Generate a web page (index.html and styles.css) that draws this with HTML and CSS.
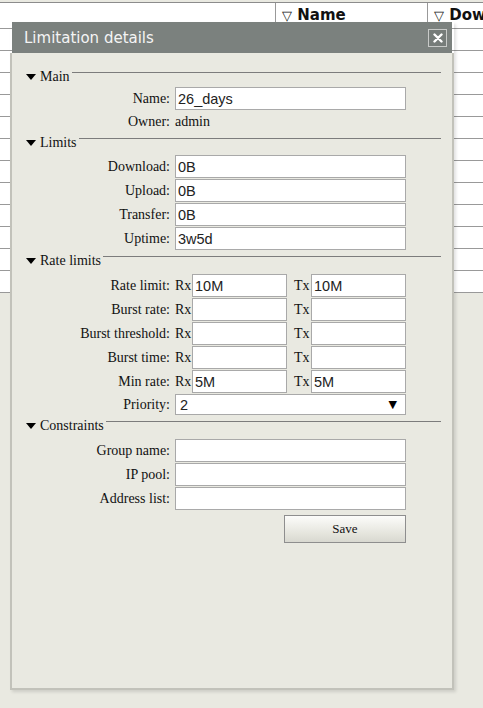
FILE: index.html
```html
<!DOCTYPE html>
<html lang="en">
<head>
    <meta charset="UTF-8">
    <meta name="viewport" content="width=device-width, initial-scale=1.0">
    <title>Limitations</title>
    <link rel="stylesheet" href="styles.css">
</head>
<body>
    <!-- list of limitations behind the dialog -->
    <div class="table">
        <div class="thead">
            <div class="th th-blank"></div>
            <div class="th th-name"><span class="sort">▽</span> Name</div>
            <div class="th th-down"><span class="sort">▽</span> Dow</div>
        </div>
        <div class="tr"></div>
        <div class="tr"></div>
        <div class="tr"></div>
        <div class="tr"></div>
        <div class="tr"></div>
        <div class="tr"></div>
        <div class="tr"></div>
        <div class="tr"></div>
        <div class="tr"></div>
        <div class="tr"></div>
        <div class="tr"></div>
        <div class="tr"></div>
    </div>

    <div class="dialog">
        <div class="dialog-title">
            <span>Limitation details</span>
            <button class="close" title="Close">
                <svg width="10" height="10" viewBox="0 0 10 10">
                    <path d="M1.5 1.5 L8.5 8.5 M8.5 1.5 L1.5 8.5" stroke="#fff" stroke-width="2.4" stroke-linecap="round"/>
                </svg>
            </button>
        </div>

        <div class="dialog-body">
            <div class="section-head head-main"><span class="arrow"></span>Main</div>
            <div class="row">
                <label>Name:</label>
                <input type="text" value="26_days">
            </div>
            <div class="row row-text">
                <label>Owner:</label>
                <span>admin</span>
            </div>

            <div class="section-head head-limits"><span class="arrow"></span>Limits</div>
            <div class="row">
                <label>Download:</label>
                <input type="text" value="0B">
            </div>
            <div class="row">
                <label>Upload:</label>
                <input type="text" value="0B">
            </div>
            <div class="row">
                <label>Transfer:</label>
                <input type="text" value="0B">
            </div>
            <div class="row">
                <label>Uptime:</label>
                <input type="text" value="3w5d">
            </div>

            <div class="section-head head-rates"><span class="arrow"></span>Rate limits</div>
            <div class="row">
                <label>Rate limit:</label>
                <div class="pair">
                    <span class="dir">Rx</span><input type="text" value="10M">
                    <span class="dir tx">Tx</span><input type="text" value="10M">
                </div>
            </div>
            <div class="row">
                <label>Burst rate:</label>
                <div class="pair">
                    <span class="dir">Rx</span><input type="text">
                    <span class="dir tx">Tx</span><input type="text">
                </div>
            </div>
            <div class="row">
                <label>Burst threshold:</label>
                <div class="pair">
                    <span class="dir">Rx</span><input type="text">
                    <span class="dir tx">Tx</span><input type="text">
                </div>
            </div>
            <div class="row">
                <label>Burst time:</label>
                <div class="pair">
                    <span class="dir">Rx</span><input type="text">
                    <span class="dir tx">Tx</span><input type="text">
                </div>
            </div>
            <div class="row">
                <label>Min rate:</label>
                <div class="pair">
                    <span class="dir">Rx</span><input type="text" value="5M">
                    <span class="dir tx">Tx</span><input type="text" value="5M">
                </div>
            </div>
            <div class="row">
                <label>Priority:</label>
                <div class="select">
                    <select>
                        <option>2</option>
                    </select>
                    <span class="caret">▼</span>
                </div>
            </div>

            <div class="section-head head-constraints"><span class="arrow"></span>Constraints</div>
            <div class="row">
                <label>Group name:</label>
                <input type="text">
            </div>
            <div class="row">
                <label>IP pool:</label>
                <input type="text">
            </div>
            <div class="row">
                <label>Address list:</label>
                <input type="text">
            </div>

            <div class="row row-actions">
                <button class="save">Save</button>
            </div>
        </div>
    </div>
</body>
</html>
```

FILE: styles.css
```css
* {
    margin: 0;
    padding: 0;
    box-sizing: border-box;
}

body {
    background: #e9e9e1;
    font-family: "Liberation Serif", serif;
    color: #111;
    height: 708px;
    overflow: hidden;
}

/* background table */
.table {
    background: #fff;
    margin-top: 2px;
    border-top: 1px solid #8c8c8c;
}

.thead {
    display: flex;
    height: 26px;
    border-bottom: 1px solid #999;
    overflow: hidden;
}

.th {
    border-left: 1px solid #999;
    padding-left: 6px;
    font: bold 15px "DejaVu Sans", sans-serif;
    line-height: 25px;
    color: #111;
    white-space: nowrap;
    flex: none;
}

.th-blank {
    width: 275px;
    border-left: none;
}

.th-name {
    width: 152px;
}

.th-down {
    flex: 1;
    min-width: 0;
}

.sort {
    font-weight: normal;
    font-size: 13px;
}

.tr {
    height: 22px;
    border-bottom: 1px solid #999;
}

/* dialog */
.dialog {
    position: absolute;
    left: 10px;
    top: 22px;
    width: 444px;
    box-shadow: 2px 2px 3px rgba(0, 0, 0, 0.12);
}

.dialog-title {
    margin: 0 2px;
    height: 31px;
    background: #7b817e;
    color: #f4f4f4;
    font: 15px "DejaVu Sans", sans-serif;
    padding-left: 12px;
    padding-right: 5px;
    display: flex;
    align-items: center;
    justify-content: space-between;
}

.close {
    width: 19px;
    height: 18px;
    border: 1px solid #c8cac8;
    background: #767c79;
    display: flex;
    align-items: center;
    justify-content: center;
    cursor: pointer;
}

.dialog-body {
    height: 637px;
    border: 2px solid #c2c2ba;
    border-top: none;
    background: #e9e9e1;
    padding: 15px 11px 0 14px;
}

.section-head {
    display: flex;
    height: 17px;
    margin-top: 2px;
    margin-bottom: 4px;
    font-size: 14px;
    line-height: 17px;
}

.head-main {
    margin-top: 0;
    margin-bottom: 2px;
}

.head-limits {
    margin-bottom: 4px;
}

.head-rates {
    margin-bottom: 5px;
}

.head-constraints {
    margin-top: 2px;
    margin-bottom: 5px;
}

.section-head::after {
    content: "";
    flex: 1;
    border-top: 1px solid #7c7c7c;
    margin-top: 4px;
    margin-left: 2px;
}

.arrow {
    width: 0;
    height: 0;
    border-left: 5px solid transparent;
    border-right: 5px solid transparent;
    border-top: 6px solid #000;
    margin-top: 6px;
    margin-right: 4px;
}

.row {
    display: grid;
    grid-template-columns: 144px 231px;
    column-gap: 5px;
    align-items: center;
    margin-bottom: 1px;
    font-size: 14px;
}

.row label {
    text-align: right;
}

.row-text {
    height: 21px;
}

input {
    height: 23px;
    width: 100%;
    border: 1px solid #a9a9a9;
    background: #fff;
    padding: 0 2px;
    font: 14.5px "Liberation Sans", Arial, sans-serif;
    color: #222;
    outline: none;
}

.pair {
    display: flex;
    align-items: center;
}

.pair .dir {
    width: 17px;
    flex: none;
}

.pair .tx {
    margin-left: 7px;
}

.pair input {
    width: 95px;
    flex: none;
}

.select {
    position: relative;
}

.select select {
    appearance: none;
    -webkit-appearance: none;
    width: 100%;
    height: 21px;
    border: 1px solid #a9a9a9;
    background: #fff;
    padding: 0 4px;
    font: 14.5px "Liberation Sans", Arial, sans-serif;
    color: #222;
    outline: none;
}

.caret {
    position: absolute;
    right: 9px;
    top: 4px;
    font: 11px "DejaVu Sans", sans-serif;
    color: #000;
    pointer-events: none;
}

.row-actions {
    margin-top: 5px;
}

.save {
    grid-column: 2;
    justify-self: end;
    width: 122px;
    height: 28px;
    border: 1px solid #8e8e8e;
    background: linear-gradient(#fcfcfa, #e4e4dc 70%, #d8d8d0);
    font: 13px "Liberation Serif", serif;
    color: #111;
    cursor: pointer;
}
```
